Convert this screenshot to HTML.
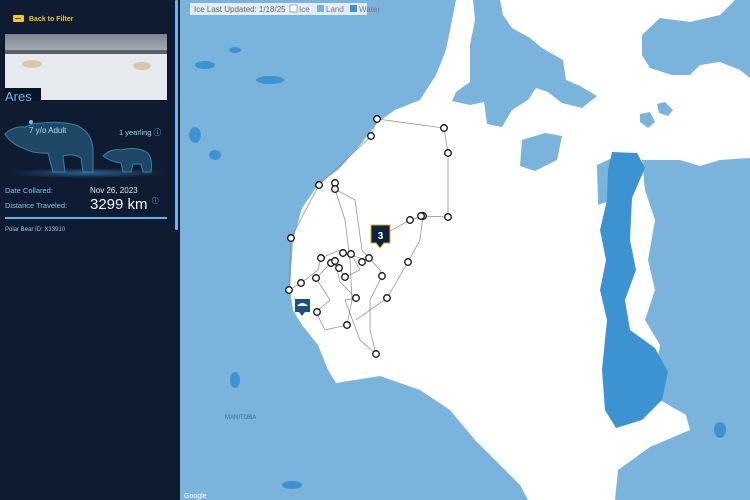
<!DOCTYPE html>
<html><head><meta charset="utf-8"><style>
*{margin:0;padding:0;box-sizing:border-box}
body{width:750px;height:500px;overflow:hidden;background:#fff;font-family:"Liberation Sans",sans-serif;position:relative}
#side{position:absolute;left:0;top:0;width:180px;height:500px;background:#0f1b31}
#map{position:absolute;left:180px;top:0;width:570px;height:500px}
.t{position:absolute;color:#7fc3ef;white-space:nowrap}
</style></head><body>
<div id="side">
  <div style="position:absolute;left:13px;top:15px;width:11px;height:7px;background:#f2c91c;border-radius:1px"></div>
  <div style="position:absolute;left:15px;top:18px;width:6px;height:1px;background:#5a4a10"></div>
  <div class="t" style="left:29px;top:16px;font-size:7px;color:#e8c430;font-weight:bold">Back to Filter</div>
  <svg style="position:absolute;left:4px;top:33px" width="164" height="68">
    <defs><linearGradient id="sky" x1="0" y1="0" x2="0" y2="1"><stop offset="0" stop-color="#7c8590"/><stop offset="1" stop-color="#a8b0b8"/></linearGradient></defs>
    <rect x="0" y="0" width="164" height="68" fill="#0a1428"/>
    <path d="M1,1H163V67H37V55H1Z" fill="#e6eaef"/>
    <rect x="1" y="1" width="162" height="18" fill="url(#sky)"/>
    <rect x="1" y="17" width="162" height="4" fill="#5a6068"/>
    <ellipse cx="28" cy="31" rx="10" ry="4" fill="#d8c7a8"/>
    <ellipse cx="138" cy="33" rx="9" ry="4" fill="#d8c7a8"/>
  </svg>
  <div class="t" style="left:5px;top:89px;font-size:13px;color:#6fb5e8">Ares</div>
  <svg style="position:absolute;left:3px;top:118px" width="165" height="60">
    <defs><radialGradient id="gl" cx="0.5" cy="0.5" r="0.5"><stop offset="0" stop-color="#3a8fd0" stop-opacity=".6"/><stop offset="1" stop-color="#3a8fd0" stop-opacity="0"/></radialGradient></defs>
    <ellipse cx="85" cy="55" rx="80" ry="5" fill="url(#gl)"/>
    <path d="M2,16 Q10,8 22,9 L30,6 Q60,2 75,8 Q88,14 90,30 L90,54 L80,54 L78,40 Q70,35 60,38 L62,54 L50,54 L45,35 Q30,36 20,30 Q8,26 2,16Z" fill="#1d4764" stroke="#3b7fae" stroke-width="1"/>
    <path d="M100,38 Q108,30 118,32 Q135,28 145,35 Q150,42 148,54 L140,54 L138,46 L130,46 L128,54 L120,54 L118,45 Q108,44 100,38Z" fill="#1d4764" stroke="#3b7fae" stroke-width="1"/>
    <circle cx="28" cy="4" r="2" fill="#6fc0f0"/>
  </svg>
  <div class="t" style="left:29px;top:126px;font-size:8px;color:#b9dcf4">7 y/o Adult</div>
  <div class="t" style="left:119px;top:127px;font-size:7.5px;color:#9dd0f2">1 yearling ⓘ</div>
  <div class="t" style="left:5px;top:186px;font-size:7.5px">Date Collared:</div>
  <div class="t" style="left:90px;top:186px;font-size:8px;color:#e6eef6">Nov 26, 2023</div>
  <div class="t" style="left:5px;top:201px;font-size:7.5px">Distance Traveled:</div>
  <div class="t" style="left:90px;top:196px;font-size:15px;color:#f2f6fa">3299 km <span style="font-size:7px;color:#9dd0f2;vertical-align:top">ⓘ</span></div>
  <div style="position:absolute;left:5px;top:217px;width:162px;height:2px;background:#5fb2e6"></div>
  <div class="t" style="left:5px;top:227px;font-size:6px;color:#9dc4e0">Polar Bear ID: X33910</div>
  <div style="position:absolute;left:175px;top:0;width:3px;height:230px;background:#6fb6e6;border-radius:1px"></div>
</div>
<svg id="map" viewBox="180 0 570 500" width="570" height="500">
  <rect x="180" y="0" width="570" height="500" fill="#fff"/>
  <path fill="#7ab4dd" d="M180,0H456L452,20L446,50L436,75L420,100L395,110L378,122L360,145L340,168L318,185L302,208L293,240L290,290L293,310L302,325L318,345L328,370L336,383L380,376L420,390L450,410L475,440L500,465L520,485L528,500H180Z"/>
  <path fill="#7ab4dd" d="M473,0H500L503,15L512,28L530,38L542,48L563,60L566,80L580,86L597,96L582,108L562,103L548,92L536,88L528,100L512,110L502,127L487,124L484,102L470,105L452,101L456,92L470,82L470,45L475,20Z"/>
  <path fill="#7ab4dd" d="M522,140L545,133L562,136L557,160L535,171L520,166Z"/>
  <path fill="#7ab4dd" d="M642,35L660,18L690,22L720,15L735,0H750V78L740,70L720,62L700,65L690,75L672,75L650,68L642,55Z"/>
  <path fill="#7ab4dd" d="M640,114L650,112L655,122L648,128L640,122Z"/>
  <path fill="#7ab4dd" d="M657,104L665,102L673,110L668,116L659,113Z"/>
  <path fill="#7ab4dd" d="M597,165L612,158L612,200L598,205Z"/>
  <path fill="#7ab4dd" d="M642,160L680,160L700,166L720,160L750,158V500H615L618,470L650,447L690,430L686,415L660,400L655,380L660,345L645,320L655,290L648,260L655,220L645,190Z"/>
  <path fill="#3d93d1" d="M612,152L637,153L645,168L632,198L630,240L636,270L625,300L630,330L655,348L668,372L662,400L642,420L616,428L605,410L602,370L607,320L600,290L606,260L600,230L607,200L608,170Z"/>
  <g fill="#3d93d1">
    <ellipse cx="270" cy="80" rx="14" ry="4"/><ellipse cx="205" cy="65" rx="10" ry="4"/><ellipse cx="195" cy="135" rx="6" ry="8"/>
    <ellipse cx="215" cy="155" rx="6" ry="5"/><ellipse cx="235" cy="380" rx="5" ry="8"/><ellipse cx="292" cy="485" rx="10" ry="4"/>
    <ellipse cx="720" cy="430" rx="6" ry="8"/><ellipse cx="235" cy="50" rx="6" ry="3"/>
  </g>
  <text x="225" y="419" font-size="6" fill="#3e6a90" font-family="Liberation Sans">MANITOBA</text>
  <text x="184" y="498" font-size="7" fill="#fff" font-family="Liberation Sans">Google</text>
  <g fill="none" stroke="#888" stroke-width="0.7">
    <polyline points="377,119 444,128 448,153 448,217 423,216 410,220 381,236 377,232"/>
    <polyline points="377,119 371,136 319,185 291,238 289,290 301,283 318,270 321,258 340,250 343,253 360,258 362,262"/>
    <polyline points="335,183 335,189 355,200 362,250 369,258 380,270 382,276 370,300 370,330 376,354 360,340 345,300 356,298 340,282 335,261 331,263 316,278 330,300 316,312"/>
    <polyline points="335,189 345,220 350,260 352,300 347,325 325,330 316,312"/>
    <polyline points="423,216 420,240 408,262 387,298 356,320"/>
    <polyline points="351,254 360,270 345,277 339,268 331,263"/>
  </g>
  <g fill="#fff" stroke="#111" stroke-width="1.3">
    <circle cx="377" cy="119" r="3.3"/><circle cx="444" cy="128" r="3.3"/><circle cx="448" cy="153" r="3.3"/><circle cx="448" cy="217" r="3.3"/>
    <circle cx="423" cy="216" r="3.3"/><circle cx="421" cy="216" r="3.3"/><circle cx="410" cy="220" r="3.3"/><circle cx="371" cy="136" r="3.3"/>
    <circle cx="291" cy="238" r="3.3"/><circle cx="319" cy="185" r="3.3"/><circle cx="335" cy="183" r="3.3"/><circle cx="335" cy="189" r="3.3"/>
    <circle cx="343" cy="253" r="3.3"/><circle cx="321" cy="258" r="3.3"/><circle cx="331" cy="263" r="3.3"/><circle cx="335" cy="261" r="3.3"/>
    <circle cx="351" cy="254" r="3.3"/><circle cx="369" cy="258" r="3.3"/><circle cx="362" cy="262" r="3.3"/><circle cx="408" cy="262" r="3.3"/>
    <circle cx="382" cy="276" r="3.3"/><circle cx="316" cy="278" r="3.3"/><circle cx="301" cy="283" r="3.3"/><circle cx="289" cy="290" r="3.3"/>
    <circle cx="339" cy="268" r="3.3"/><circle cx="345" cy="277" r="3.3"/><circle cx="356" cy="298" r="3.3"/><circle cx="387" cy="298" r="3.3"/>
    <circle cx="317" cy="312" r="3.3"/><circle cx="347" cy="325" r="3.3"/><circle cx="376" cy="354" r="3.3"/>
  </g>
  <path d="M371,225H390V243H384L380,248L376,243H371Z" fill="#0e2340" stroke="#d9a92c" stroke-width="1"/>
  <text x="380.5" y="239" font-size="10" font-weight="bold" fill="#fff" text-anchor="middle" font-family="Liberation Sans">3</text>
  <path d="M295,299H310V312H305L302,316L299,312H295Z" fill="#1d4f85"/>
  <path d="M297,306Q302,300 308,306Z" fill="#fff"/>
  <rect x="190" y="3" width="177" height="12" fill="#eef3f8" opacity=".9"/>
  <text x="194" y="12" font-size="8" fill="#666" font-family="Liberation Sans">Ice Last Updated: 1/18/25</text>
  <rect x="290" y="5" width="7" height="7" fill="#fff" stroke="#777" stroke-width=".6"/>
  <text x="299" y="12" font-size="8" fill="#777" font-family="Liberation Sans">Ice</text>
  <rect x="317" y="5" width="7" height="7" fill="#7ab4dd"/>
  <text x="326" y="12" font-size="8" fill="#777" font-family="Liberation Sans">Land</text>
  <rect x="350" y="5" width="7" height="7" fill="#3d93d1"/>
  <text x="359" y="12" font-size="8" fill="#777" font-family="Liberation Sans">Water</text>
</svg>
</body></html>
